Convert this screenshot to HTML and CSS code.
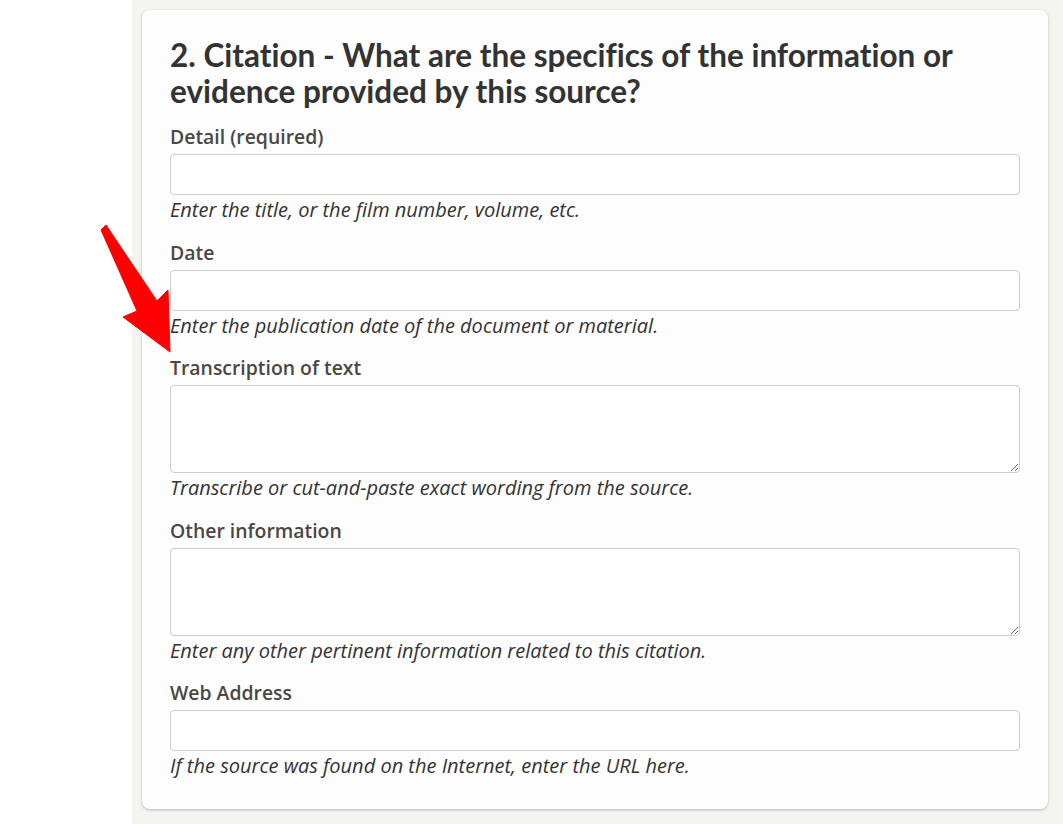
FILE: index.html
```html
<!DOCTYPE html>
<html>

<head>
    <meta name="viewport" content="width=device-width, initial-scale=1">
    <link rel="stylesheet" href="styles.css">
</head>

<body>

<div class="page">
    <div class="side"></div>

    <div class="main">
        <form class="card">
            <h2>2. Citation - What are the specifics of the information or evidence provided by this source?</h2>

            <div class="field">
                <label for="detail">Detail (required)</label>
                <input type="text" id="detail" name="detail">
                <span class="hint">Enter the title, or the film number, volume, etc.</span>
            </div>

            <div class="field">
                <label for="date">Date</label>
                <input type="text" id="date" name="date">
                <span class="hint">Enter the publication date of the document or material.</span>
            </div>

            <div class="field">
                <label for="transcription">Transcription of text</label>
                <textarea id="transcription" name="transcription"></textarea>
                <span class="hint">Transcribe or cut-and-paste exact wording from the source.</span>
            </div>

            <div class="field">
                <label for="other">Other information</label>
                <textarea id="other" name="other"></textarea>
                <span class="hint">Enter any other pertinent information related to this citation.</span>
            </div>

            <div class="field">
                <label for="url">Web Address</label>
                <input type="text" id="url" name="url">
                <span class="hint">If the source was found on the Internet, enter the URL here.</span>
            </div>
        </form>
    </div>

    <!-- annotation arrow -->
    <svg class="arrow" width="180" height="360" viewBox="0 0 180 360">
        <polygon points="101,230 106,225 157,301 168,290 170,352 123,317 137,311" fill="#f00" stroke="#f00" stroke-width="1" stroke-linejoin="round"/>
    </svg>
</div>

</body>
</html>
```

FILE: styles.css
```css
body {
    margin: 0;
    font-family: "Open Sans", Lato, sans-serif;
    color: #333;
    background: #fff;
}

.page {
    display: flex;
    min-height: 824px;
    position: relative;
}

.side {
    width: 132px;
    flex: none;
    background: #fff;
}

.main {
    flex: 1;
    background: #f4f4f0;
    padding: 10px 15px 16px 10px;
}

.card {
    background: #fdfdfd;
    border-radius: 8px;
    box-shadow: 0 1px 3px rgba(0, 0, 0, 0.25);
    padding: 27px 28px 28px 28px;
}

h2 {
    margin: 0 0 15px 0;
    font-family: Lato, sans-serif;
    font-variant-ligatures: none;
    font-size: 31.5px;
    line-height: 36px;
    font-weight: 700;
    color: #333;
}

.field {
    display: flex;
    flex-direction: column;
    margin-bottom: 14.5px;
}

.field:last-child {
    margin-bottom: 0;
}

label {
    font-size: 19.4px;
    line-height: 26px;
    font-weight: 600;
    color: #4a4744;
    margin-bottom: 4px;
}

input[type=text], textarea {
    width: 100%;
    box-sizing: border-box;
    height: 41px;
    border: 1px solid #ccc;
    border-radius: 4px;
    background: #fff;
    font-family: inherit;
    font-size: 18px;
    margin: 0;
}

textarea {
    height: 88px;
    resize: vertical;
    display: block;
}

.hint {
    font-size: 20px;
    line-height: 30px;
    font-style: italic;
    color: #333;
}

.arrow {
    position: absolute;
    left: 0;
    top: 0;
    pointer-events: none;
}
```
